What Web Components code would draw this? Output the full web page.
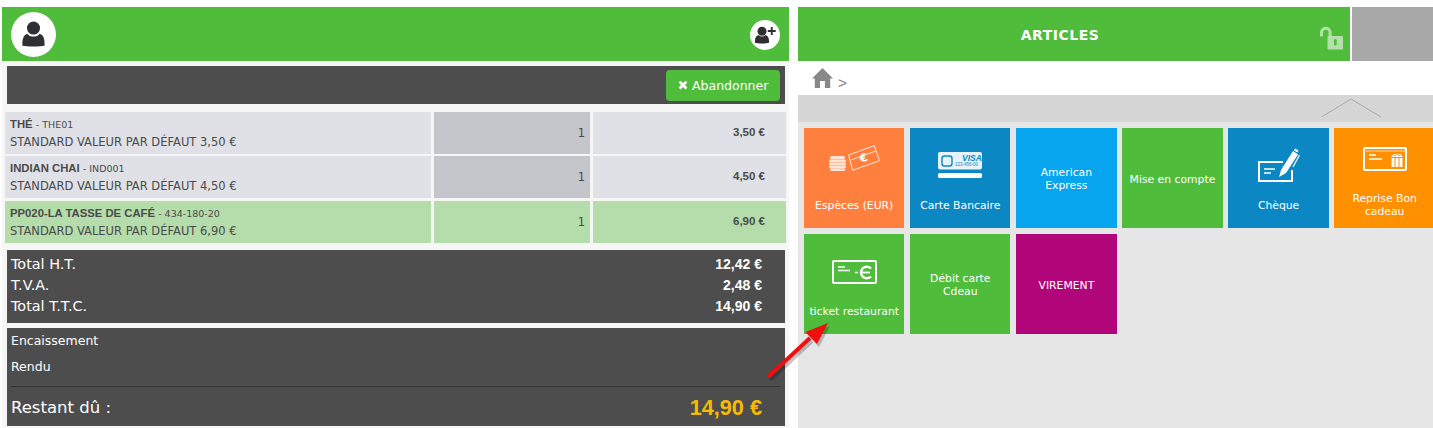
<!DOCTYPE html>
<html lang="fr">
<head>
<meta charset="utf-8">
<title>Caisse</title>
<style>
html, body { margin: 0; height: 428px; overflow: hidden; background: #fff; }
body { font-family: "DejaVu Sans", sans-serif; }
</style>
</head>
<body>
<pos-app>
  <section slot="left">
    <client-bar></client-bar>
    <action-bar label="Abandonner"></action-bar>
    <ticket-list>
      <ticket-row name="THÉ" code="THE01" detail="STANDARD VALEUR PAR DÉFAUT 3,50 €" qty="1" price="3,50 €"></ticket-row>
      <ticket-row name="INDIAN CHAI" code="IND001" detail="STANDARD VALEUR PAR DÉFAUT 4,50 €" qty="1" price="4,50 €"></ticket-row>
      <ticket-row selected name="PP020-LA TASSE DE CAFÉ" code="434-180-20" detail="STANDARD VALEUR PAR DÉFAUT 6,90 €" qty="1" price="6,90 €"></ticket-row>
    </ticket-list>
    <totals-box>
      <total-line label="Total H.T." value="12,42 €"></total-line>
      <total-line label="T.V.A." value="2,48 €"></total-line>
      <total-line label="Total T.T.C." value="14,90 €"></total-line>
    </totals-box>
    <payment-box remaining="14,90 €"></payment-box>
  </section>
  <section slot="right">
    <articles-bar></articles-bar>
    <bread-crumb></bread-crumb>
    <collapse-strip></collapse-strip>
    <tile-grid>
      <pay-tile color="#ff7f3f" icon="cash" label="Espèces (EUR)"></pay-tile>
      <pay-tile color="#0b87c3" icon="card" label="Carte Bancaire"></pay-tile>
      <pay-tile color="#06a5ee" label="American Express"></pay-tile>
      <pay-tile color="#50bc3b" label="Mise en compte"></pay-tile>
      <pay-tile color="#0b87c3" icon="cheque" label="Chèque"></pay-tile>
      <pay-tile color="#ff9000" icon="gift" label="Reprise Bon cadeau"></pay-tile>
      <pay-tile color="#50bc3b" icon="ticket" label="ticket restaurant"></pay-tile>
      <pay-tile color="#50bc3b" label="Débit carte Cdeau"></pay-tile>
      <pay-tile color="#b10679" label="VIREMENT"></pay-tile>
    </tile-grid>
  </section>
  <red-arrow slot="over"></red-arrow>
</pos-app>

<script>
// base class, every element just gives its css and html
class Piece extends HTMLElement {
    constructor() {
        super();
        this.attachShadow({ mode: "open" });
    }
    connectedCallback() {
        this.shadowRoot.innerHTML = `<style>${this.css()}</style>${this.html()}`;
    }
    attr(name) {
        return this.getAttribute(name) || "";
    }
}

class PosApp extends Piece {
    css() {
        return `
:host { display: block; position: relative; width: 1433px; height: 428px; overflow: hidden; }
.page { display: grid; grid-template-columns: 787px 635px; column-gap: 9px; padding: 7px 0 0 2px; height: 421px; }
::slotted(section) { display: flex; flex-direction: column; height: 421px; }
::slotted([slot="left"]) { background: #f6f6f6; }
::slotted([slot="right"]) { background: #e6e6e6; }`;
    }
    html() {
        return `<div class="page"><slot name="left"></slot><slot name="right"></slot></div><slot name="over"></slot>`;
    }
}

class ClientBar extends Piece {
    css() {
        return `
:host { display: flex; align-items: center; justify-content: space-between; height: 54px; background: #50bc3b; padding: 0 9px; box-sizing: border-box; flex: none; }
.round { display: flex; align-items: center; justify-content: center; background: #fff; border-radius: 50%; }
.big { width: 45px; height: 45px; }
.small { width: 30px; height: 30px; margin-top: 2px; }
svg { display: block; fill: #2e2e33; }`;
    }
    html() {
        return `
<div class="round big"><svg width="23" height="26" viewBox="0 0 24 26">
  <circle cx="12" cy="6.800" r="6.800"/>
  <path d="M.5 25.200c-.4-6.500.8-11 5-12.500 1.500 2 3.800 3 6.500 3s5-1 6.500-3c4.200 1.500 5.400 6 5 12.500-3.500 1.100-19.500 1.100-23 0z"/>
</svg></div>
<div class="round small"><svg width="22" height="18" viewBox="0 0 22 18">
  <circle cx="8" cy="5.300" r="4.500"/>
  <path d="M1 16.800c-.4-4.400.8-7 3.700-7.800 1 1.100 2 1.500 3.300 1.500s2.300-.4 3.300-1.500c2.900.8 4.100 3.400 3.700 7.800-2.200.9-11.800.9-14 0z"/>
  <path d="M16.800 1h1.900v3h3v1.900h-3v3h-1.900v-3h-3V4h3z"/>
</svg></div>`;
    }
}

class ActionBar extends Piece {
    css() {
        return `
:host { display: flex; justify-content: flex-end; align-items: center; height: 38px; margin: 5px 4px 0 5px; padding-right: 5px; background: #4d4d4d; box-sizing: border-box; flex: none; }
button { display: flex; align-items: center; gap: 4px; width: 114px; height: 31px; padding: 0 0 0 12px; box-sizing: border-box; border: 0; border-radius: 4px; background: #50bc3b; color: #fff; font: 12.5px "DejaVu Sans", sans-serif; }
svg { display: block; fill: #fff; }`;
    }
    html() {
        return `<button><svg width="10" height="10" viewBox="0 0 10 10"><path d="M2.500.7 5 3.100 7.500.7 9.400 2.600 7 5l2.400 2.500-1.900 1.900L5 7 2.500 9.400.6 7.500 3 5 .6 2.600z"/></svg>${this.attr("label")}</button>`;
    }
}

class TicketList extends Piece {
    css() {
        return `:host { display: grid; grid-template-rows: 41px 42px 41px; row-gap: 3px; margin: 8px 3px 0 3px; flex: none; }`;
    }
    html() {
        return `<slot></slot>`;
    }
}

class TicketRow extends Piece {
    css() {
        const sel = this.hasAttribute("selected");
        return `
:host { display: grid; grid-template-columns: 426px 156px 193px; column-gap: 3px; color: #4a4a4a; }
div { background: ${sel ? "#b4ddab" : "#e0e1e6"}; box-sizing: border-box; }
.label { padding: 1px 0 0 5px; }
.title { font: bold 11.3px/14px "Liberation Sans", sans-serif; white-space: nowrap; }
.code { font: 9.5px "DejaVu Sans", sans-serif; }
.detail { font: 11.5px/14px "DejaVu Sans", sans-serif; margin: 3px 0 0; white-space: nowrap; }
.qty { background: ${sel ? "#b4ddab" : "#c5c6cb"}; text-align: right; padding: 0 5px; font: 11.5px/42px "DejaVu Sans", sans-serif; }
.price { text-align: right; padding-right: 21px; font: bold 11.5px/41px "Liberation Sans", sans-serif; }`;
    }
    html() {
        return `
<div class="label">
  <span class="title">${this.attr("name")} <span class="code">- ${this.attr("code")}</span></span>
  <p class="detail">${this.attr("detail")}</p>
</div>
<div class="qty">${this.attr("qty")}</div>
<div class="price">${this.attr("price")}</div>`;
    }
}

class TotalsBox extends Piece {
    css() {
        return `:host { display: block; height: 73px; margin: 8px 4px 0 5px; padding: 4px 23px 0 4px; box-sizing: border-box; background: #4d4d4d; flex: none; }`;
    }
    html() {
        return `<slot></slot>`;
    }
}

class TotalLine extends Piece {
    css() {
        return `
:host { display: flex; justify-content: space-between; height: 21px; line-height: 21px; color: #fff; }
.l { font: 14.4px/21px "DejaVu Sans", sans-serif; }
.v { font: bold 14px/21px "Liberation Sans", sans-serif; }`;
    }
    html() {
        return `<span class="l">${this.attr("label")}</span><span class="v">${this.attr("value")}</span>`;
    }
}

class PaymentBox extends Piece {
    css() {
        return `
:host { display: block; height: 98px; margin: 5px 4px 0 5px; padding: 0 5px 0 4px; box-sizing: border-box; background: #4d4d4d; color: #fff; flex: none; }
.row { font: 12.5px/26px "DejaVu Sans", sans-serif; height: 26px; }
.rest { display: flex; justify-content: space-between; align-items: center; border-top: 1px solid #333; margin-top: 6px; height: 41px; padding-right: 18px; }
.rest span:first-child { font: 16.5px "DejaVu Sans", sans-serif; }
.rest span:last-child { font: bold 21.7px "Liberation Sans", sans-serif; color: #f7bb07; }`;
    }
    html() {
        return `
<div class="row">Encaissement</div>
<div class="row">Rendu</div>
<div class="rest"><span>Restant dû :</span><span>${this.attr("remaining")}</span></div>`;
    }
}

class ArticlesBar extends Piece {
    css() {
        return `
:host { display: flex; height: 54px; background: #fff; flex: none; }
.main { width: 552px; display: flex; background: #50bc3b; }
.title { flex: 1; padding: 1px 0 0 2px; text-align: center; color: #fff; font: bold 14px/54px "DejaVu Sans", sans-serif; letter-spacing: .5px; }
svg { display: block; align-self: flex-end; margin: 0 7px 11px 0; fill: #b4e0ab; }
.side { width: 81px; margin-left: 2px; background: #a8a8a8; }`;
    }
    html() {
        return `
<div class="main"><div class="title">ARTICLES</div>
<svg width="23" height="23" viewBox="0 0 23 23">
  <path fill="none" stroke="#b4e0ab" stroke-width="3" d="M1.500 9.500V5.500a4.300 4.300 0 0 1 8.600 0V9.500"/>
  <rect x="7.500" y="9" width="15.500" height="13.500" rx="1"/>
  <circle cx="15.300" cy="13.500" r="1.600" fill="#50bc3b"/>
  <rect x="14" y="13.500" width="2.600" height="5" rx="1" fill="#50bc3b"/>
</svg></div>
<div class="side"></div>`;
    }
}

class BreadCrumb extends Piece {
    css() {
        return `
:host { display: flex; align-items: flex-start; height: 34px; padding: 7px 0 0 14px; box-sizing: border-box; background: #fff; flex: none; color: #808080; }
svg { display: block; fill: #888; }
span { font: 15.5px/20px "Liberation Sans", sans-serif; margin: 5px 0 0 5px; }`;
    }
    html() {
        return `<svg width="21" height="20" viewBox="0 0 21 20"><path fill-rule="evenodd" d="M10.500 0 21 10.500h-2.800V20H2.800v-9.500H0zM8 13v7h5v-7z"/></svg><span>&gt;</span>`;
    }
}

class CollapseStrip extends Piece {
    css() {
        return `
:host { display: flex; justify-content: flex-end; height: 27px; background: #d6d6d6; flex: none; padding-right: 50px; }
svg { display: block; fill: none; stroke: #a9a9a9; stroke-width: 1; }`;
    }
    html() {
        return `<svg width="62" height="27" viewBox="0 0 62 27"><polyline points="0.500,22 30,4 60,22"/></svg>`;
    }
}

class TileGrid extends Piece {
    css() {
        return `:host { display: grid; grid-template-columns: repeat(6, 100.4px); grid-auto-rows: 100.4px; gap: 5.71px; padding: 6px 0 0 6px; }`;
    }
    html() {
        return `<slot></slot>`;
    }
}

// top = distance from the top of the tile
const ICONS = {
    cash: { top: 17, svg: `<svg width="51" height="26" viewBox="0 0 51 26">
      <g fill="#ffe3d3"><rect x="1" y="11" width="15" height="3.200" rx="1.500"/><rect x="0" y="14.400" width="17" height="2.800" rx="1.300"/><rect x="0" y="17.500" width="17" height="2.800" rx="1.300"/><rect x="0" y="20.600" width="17" height="2.800" rx="1.300"/><rect x="1" y="23.500" width="15" height="2.500" rx="1.200"/></g>
      <path fill="none" stroke="#ffe6d9" stroke-width="1" d="M19.500 10 45.300.7 50.500 15.700 23.700 25.300z"/>
      <path fill="none" stroke="#ffe6d9" stroke-width="1" d="M22 15 47 6"/>
      <text x="30.500" y="16.500" fill="#fff" font-family="DejaVu Sans" font-weight="bold" font-size="11" transform="rotate(-20 35 12)">€</text>
    </svg>` },
    card: { top: 24, svg: `<svg width="44" height="26" viewBox="0 0 44 26">
      <rect width="44" height="17.500" rx="2" fill="#e6f3fa"/>
      <rect x="4" y="4" width="10" height="10" rx="2.500" fill="none" stroke="#0b87c3" stroke-width="1.400"/>
      <text x="24" y="8.500" fill="#0b87c3" font-family="Liberation Sans" font-style="italic" font-weight="bold" font-size="8.500">VISA</text>
      <text x="17" y="13.500" fill="#0b87c3" font-family="Liberation Sans" font-size="4.500">123-456-00</text>
      <rect y="21" width="44" height="5" rx="1.500" fill="#fff"/>
    </svg>` },
    cheque: { top: 20, svg: `<svg width="42" height="34" viewBox="0 0 42 34">
      <path fill="none" stroke="#fff" stroke-width="2" d="M25 14H1v19h33V22"/>
      <path fill="none" stroke="#fff" stroke-width="1.500" d="M6 21h11M6 25h7"/>
      <path fill="#fff" d="M21 29l2-7 12-19 5 3.500-12 18.500z"/>
      <path fill="#fff" d="M37 .5l3.500 2-1 2-3.500-2z"/>
      <path fill="none" stroke="#fff" stroke-width="1.200" d="M41.500 7 35 19"/>
    </svg>` },
    gift: { top: 19, svg: `<svg width="44" height="24" viewBox="0 0 44 24">
      <rect x="1" y="1" width="42" height="22" rx="1" fill="none" stroke="#fff" stroke-width="2"/>
      <path fill="none" stroke="#ffd79a" stroke-width="1" d="M1 4h42"/>
      <path fill="none" stroke="#fff" stroke-width="1.500" d="M6 8h7M6 12h13"/>
      <path fill="#fff" d="M28.500 11h3v9h-3zM32.500 11h3v9h-3zM36.500 11h3v9h-3z"/>
      <path fill="none" stroke="#fff" stroke-width="1.200" d="M28.500 9.500h11M30 9c0-2 3-2 4 0 1-2 4-2 4 0"/>
    </svg>` },
    ticket: { top: 26, svg: `<svg width="45" height="24" viewBox="0 0 45 24">
      <rect x="1" y="1" width="43" height="22" rx="1" fill="none" stroke="#fff" stroke-width="2"/>
      <path fill="none" stroke="#fff" stroke-width="1.500" d="M6 7h7M6 10.500h12M23 12.500h3"/>
      <path fill="none" stroke="#fff" stroke-width="2.400" d="M39 8.500a5.800 5.800 0 1 0 0 8"/>
      <path fill="none" stroke="#fff" stroke-width="1.800" d="M28 12.500h10"/>
    </svg>` }
};

class PayTile extends Piece {
    css() {
        const icon = ICONS[this.attr("icon")];
        return `
:host { display: grid; grid-template-rows: ${icon ? "54px 46px" : "1fr"}; background: ${this.attr("color")}; color: #fff; }
.icon { display: flex; justify-content: center; align-items: flex-start; padding-top: ${icon ? icon.top : 0}px; height: 54px; box-sizing: border-box; }
svg { display: block; overflow: visible; }
.label { display: flex; align-items: center; justify-content: center; text-align: center; padding: ${icon ? 0 : 2}px 4px 0; font: 10.8px/13px "DejaVu Sans", sans-serif; }`;
    }
    html() {
        const icon = ICONS[this.attr("icon")];
        return `${icon ? `<div class="icon">${icon.svg}</div>` : ""}<div class="label">${this.attr("label")}</div>`;
    }
}

class RedArrow extends Piece {
    css() {
        return `
:host { position: absolute; left: 760px; top: 315px; width: 76px; height: 70px; }
svg { display: block; overflow: visible; }`;
    }
    html() {
        return `<svg width="76" height="70" viewBox="0 0 76 70">
  <g transform="translate(2 3)" opacity=".22" fill="#000" stroke="#000">
    <path stroke-width="4" d="M8 62 50 23" fill="none"/><path stroke="none" d="M68 8 45.500 17 57 29z"/>
  </g>
  <path stroke="#f00f0f" stroke-width="4" d="M8 62 50 23" fill="none"/>
  <path fill="#f00f0f" d="M68 8 45.500 17 57 29z"/>
</svg>`;
    }
}

customElements.define("pos-app", PosApp);
customElements.define("client-bar", ClientBar);
customElements.define("action-bar", ActionBar);
customElements.define("ticket-list", TicketList);
customElements.define("ticket-row", TicketRow);
customElements.define("totals-box", TotalsBox);
customElements.define("total-line", TotalLine);
customElements.define("payment-box", PaymentBox);
customElements.define("articles-bar", ArticlesBar);
customElements.define("bread-crumb", BreadCrumb);
customElements.define("collapse-strip", CollapseStrip);
customElements.define("tile-grid", TileGrid);
customElements.define("pay-tile", PayTile);
customElements.define("red-arrow", RedArrow);
</script>
</body>
</html>
